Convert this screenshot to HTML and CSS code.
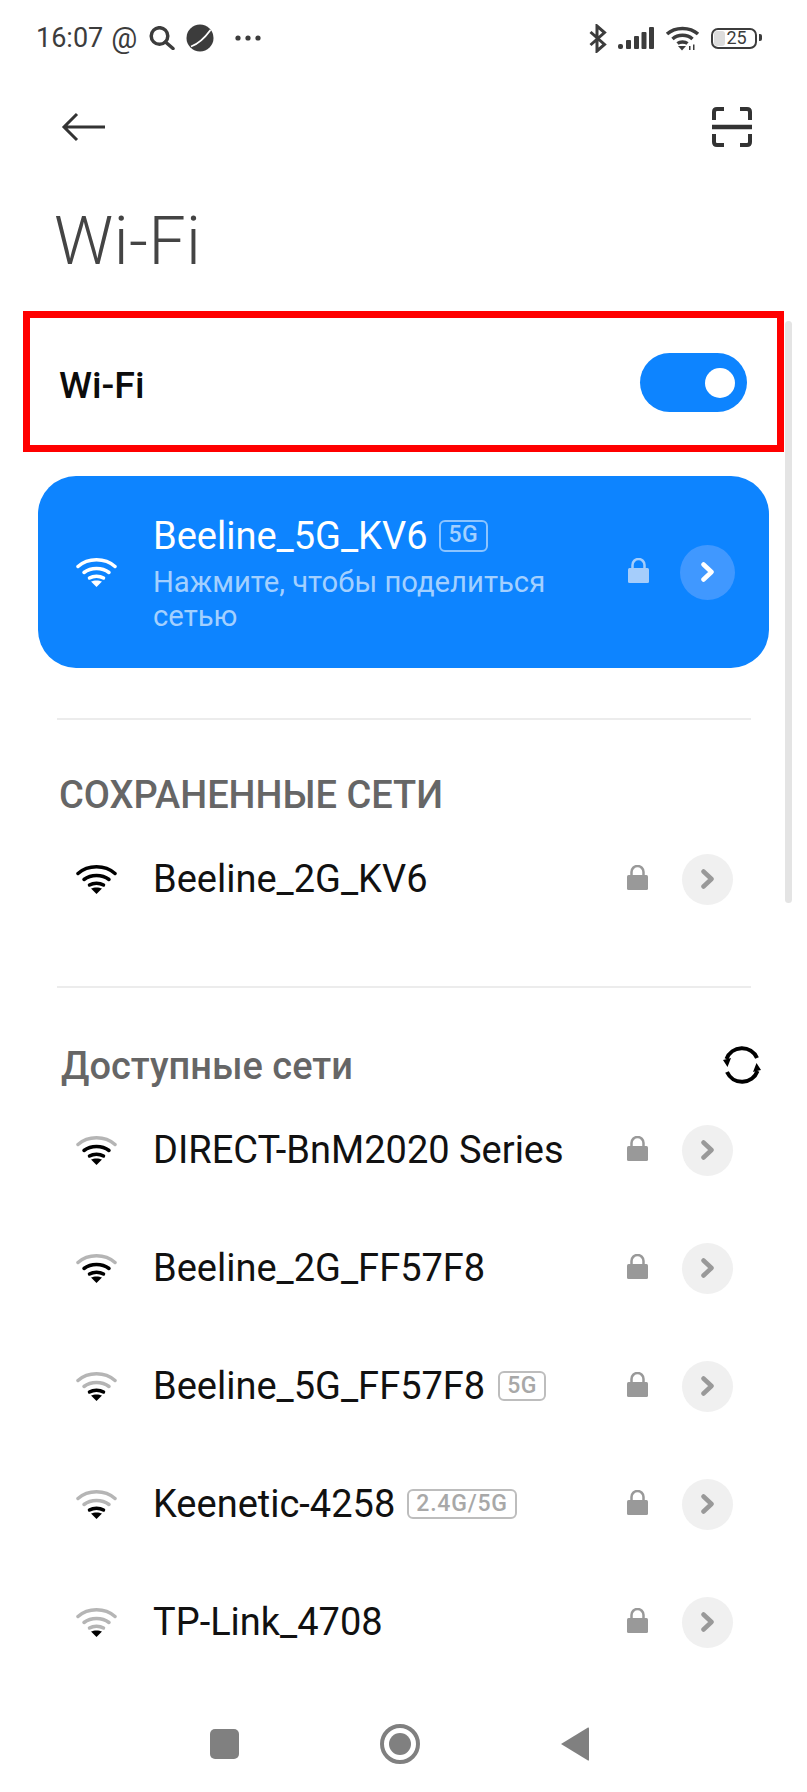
FILE: index.html
```html
<!DOCTYPE html>
<html lang="ru">
<head>
    <meta charset="UTF-8">
    <meta name="viewport" content="width=device-width, initial-scale=1.0">
    <title>Wi-Fi</title>
    <link rel="stylesheet" href="styles.css">
</head>
<body>
    <!-- shared icons -->
    <svg class="defs" width="0" height="0">
        <symbol id="wifi" viewBox="0 0 41 30">
            <path class="arc arc-outer" d="M2 9.5C12 0.5 29 0.5 39 9.5"/>
            <path class="arc arc-mid" d="M8 15.5C15 10 26 10 33 15.5"/>
            <path class="arc arc-inner" d="M13.5 21C17.5 18.5 23.5 18.5 27.5 21"/>
            <path class="wedge" d="M15 24.5C18 23 23 23 26 24.5L20.5 30Z"/>
        </symbol>
        <symbol id="lock" viewBox="0 0 21 25">
            <path class="lock-ring" d="M4.5 11V7a6 6 0 0 1 12 0V11"/>
            <rect class="lock-body" x="0" y="10" width="21" height="15" rx="1.5"/>
        </symbol>
        <symbol id="chevron" viewBox="0 0 14 20">
            <path class="chev-line" d="M2.5 2.5L10.5 10L2.5 17.5"/>
        </symbol>
    </svg>

    <div class="scrollbar"></div>

    <div class="status">
        <div class="status-left">
            <span class="time">16:07</span>
            <span class="at">@</span>
            <svg class="ic-search" width="26" height="24" viewBox="0 0 26 24">
                <circle cx="10.5" cy="10" r="8.3"/>
                <path d="M16.5 16L24 22.5"/>
            </svg>
            <svg class="ic-planet" width="28" height="28" viewBox="0 0 28 28">
                <circle cx="14" cy="14" r="13.5"/>
                <path d="M5 22.500Q15 19 24.500 6"/>
            </svg>
            <svg class="ic-dots" width="26" height="6" viewBox="0 0 26 6">
                <circle cx="3" cy="3" r="2.6"/>
                <circle cx="13" cy="3" r="2.6"/>
                <circle cx="23" cy="3" r="2.6"/>
            </svg>
        </div>
        <div class="status-right">
            <svg class="ic-bt" width="18" height="29" viewBox="0 0 18 29">
                <path d="M1.5 8L15.5 20.5L8 27V2L15.5 8.5L1.5 21"/>
            </svg>
            <svg class="ic-signal" width="36" height="22" viewBox="0 0 36 22">
                <rect x="0" y="17" width="5" height="5" rx="2"/>
                <rect x="8" y="13" width="5" height="9" rx="1"/>
                <rect x="16" y="9" width="5" height="13" rx="1"/>
                <rect x="23.5" y="5" width="5" height="17" rx="1"/>
                <rect x="31" y="0" width="5" height="22" rx="1"/>
            </svg>
            <svg class="ic-wifi-small" width="35" height="26" viewBox="0 0 35 26">
                <path d="M2 9C10 1.5 25 1.500 33 9"/>
                <path d="M7.500 14C13 9 22 9 27.500 14"/>
                <path d="M12.500 18.500C15 16.500 20 16.500 22.500 18.500"/>
                <path class="fill" d="M13 21H21L17 25.500Z"/>
                <path class="fill" d="M24 25V21H25.500V25ZM28 25V19.500H29.500V25Z"/>
            </svg>
            <div class="battery">
                <div class="battery-level"></div>
                <span class="battery-text">25</span>
            </div>
        </div>
    </div>

    <div class="toolbar">
        <svg class="ic-back" width="44" height="30" viewBox="0 0 44 30">
            <path d="M44 15H3M16 2L3 15L16 28"/>
        </svg>
        <svg class="ic-scan" width="40" height="40" viewBox="0 0 40 40">
            <path d="M12 2H5Q2 2 2 5V13M28 2H35Q38 2 38 5V13M12 38H5Q2 38 2 35V27M28 38H35Q38 38 38 35V27"/>
            <path class="scan-bar" d="M0 20H40"/>
        </svg>
    </div>

    <h1 class="title">Wi-Fi</h1>

    <div class="switch-box">
        <span class="switch-label">Wi-Fi</span>
        <div class="toggle"><div class="knob"></div></div>
    </div>

    <div class="current">
        <svg class="wifi"><use href="#wifi"/></svg>
        <div class="current-text">
            <div class="current-name">
                <span>Beeline_5G_KV6</span>
                <span class="badge">5G</span>
            </div>
            <div class="current-sub">Нажмите, чтобы поделиться сетью</div>
        </div>
        <svg class="lock"><use href="#lock"/></svg>
        <div class="go"><svg class="chevron"><use href="#chevron"/></svg></div>
    </div>

    <div class="divider first"></div>

    <div class="section-head saved">СОХРАНЕННЫЕ СЕТИ</div>
    <div class="row">
        <svg class="wifi"><use href="#wifi"/></svg>
        <span class="name">Beeline_2G_KV6</span>
        <svg class="lock"><use href="#lock"/></svg>
        <div class="go"><svg class="chevron"><use href="#chevron"/></svg></div>
    </div>

    <div class="divider second"></div>

    <div class="section-head available">
        <span>Доступные сети</span>
        <svg class="ic-sync" width="40" height="40" viewBox="0 0 40 40">
            <path d="M4.500 14A16.500 16.500 0 0 1 35 13M35.500 26A16.500 16.500 0 0 1 5 27"/>
            <path class="fill" d="M1 15L9 13L5.500 22ZM39 25L31 27L34.500 18Z"/>
        </svg>
    </div>

    <div class="row">
        <svg class="wifi lvl-3"><use href="#wifi"/></svg>
        <span class="name">DIRECT-BnM2020 Series</span>
        <svg class="lock"><use href="#lock"/></svg>
        <div class="go"><svg class="chevron"><use href="#chevron"/></svg></div>
    </div>
    <div class="row">
        <svg class="wifi lvl-3"><use href="#wifi"/></svg>
        <span class="name">Beeline_2G_FF57F8</span>
        <svg class="lock"><use href="#lock"/></svg>
        <div class="go"><svg class="chevron"><use href="#chevron"/></svg></div>
    </div>
    <div class="row">
        <svg class="wifi lvl-2"><use href="#wifi"/></svg>
        <span class="name">Beeline_5G_FF57F8</span>
        <span class="badge">5G</span>
        <svg class="lock"><use href="#lock"/></svg>
        <div class="go"><svg class="chevron"><use href="#chevron"/></svg></div>
    </div>
    <div class="row">
        <svg class="wifi lvl-2"><use href="#wifi"/></svg>
        <span class="name">Keenetic-4258</span>
        <span class="badge wide">2.4G/5G</span>
        <svg class="lock"><use href="#lock"/></svg>
        <div class="go"><svg class="chevron"><use href="#chevron"/></svg></div>
    </div>
    <div class="row">
        <svg class="wifi lvl-1"><use href="#wifi"/></svg>
        <span class="name">TP-Link_4708</span>
        <svg class="lock"><use href="#lock"/></svg>
        <div class="go"><svg class="chevron"><use href="#chevron"/></svg></div>
    </div>

    <div class="navbar">
        <svg width="29" height="30" viewBox="0 0 29 30"><rect width="29" height="30" rx="5"/></svg>
        <svg width="40" height="40" viewBox="0 0 40 40">
            <circle class="nav-ring" cx="20" cy="20" r="18"/>
            <circle cx="20" cy="20" r="11"/>
        </svg>
        <svg width="28" height="34" viewBox="0 0 28 34"><path d="M0 17L27 0.5Q28 0 28 1.500V32.500Q28 34 27 33.500Z"/></svg>
    </div>
</body>
</html>
```

FILE: styles.css
```css
body {
    margin: 0;
    width: 807px;
    height: 1792px;
    overflow: hidden;
    position: relative;
    background: #fff;
    color: #111;
    font-family: Roboto, "Liberation Sans", sans-serif;
}
.defs {
    position: absolute;
}
.scrollbar {
    position: absolute;
    left: 785px;
    top: 321px;
    width: 7px;
    height: 582px;
    border-radius: 4px;
    background: #e4e4e4;
}

/* status bar */
.status {
    height: 76px;
    padding: 0 50px 0 36px;
    display: flex;
    align-items: center;
    justify-content: space-between;
    color: #3c3c3c;
}
.status-left,
.status-right {
    display: flex;
    align-items: center;
}
.status-right {
    gap: 11px;
}
.time {
    font-size: 27px;
}
.at {
    font-size: 29px;
    margin-left: 8px;
}
.ic-search {
    margin-left: 12px;
    fill: none;
    stroke: #3c3c3c;
    stroke-width: 3.5;
    stroke-linecap: round;
}
.ic-planet {
    margin-left: 11px;
    fill: #3c3c3c;
}
.ic-planet path {
    fill: none;
    stroke: #fff;
    stroke-width: 1.8;
}
.ic-dots {
    margin-left: 21px;
    fill: #3c3c3c;
}
.ic-bt {
    fill: none;
    stroke: #3c3c3c;
    stroke-width: 3;
}
.ic-signal {
    fill: #3c3c3c;
}
.ic-wifi-small {
    fill: none;
    stroke: #3c3c3c;
    stroke-width: 3.5;
}
.ic-wifi-small .fill,
.ic-sync .fill {
    fill: currentColor;
    stroke: none;
}
.battery {
    position: relative;
    width: 46px;
    height: 21px;
    box-sizing: border-box;
    border: 2.5px solid #3c3c3c;
    border-radius: 7px;
    display: flex;
    align-items: center;
    justify-content: center;
}
.battery::after {
    content: "";
    position: absolute;
    right: -7px;
    top: 4px;
    width: 3px;
    height: 7px;
    border-radius: 0 2px 2px 0;
    background: #3c3c3c;
}
.battery-level {
    position: absolute;
    left: 1px;
    top: 1px;
    bottom: 1px;
    width: 11px;
    border-radius: 3px;
    background: #dcdcdc;
}
.battery-text {
    position: relative;
    margin-left: 5px;
    font-size: 18px;
    line-height: 1;
}

/* toolbar and title */
.toolbar {
    height: 102px;
    padding: 0 55px 0 61px;
    display: flex;
    align-items: center;
    justify-content: space-between;
}
.ic-back {
    fill: none;
    stroke: #333;
    stroke-width: 3;
}
.ic-scan {
    fill: none;
    stroke: #333;
    stroke-width: 4;
}
.scan-bar {
    stroke-width: 4.5;
}
.title {
    margin: 14px 0 19px 54px;
    height: 100px;
    font-size: 66px;
    line-height: 100px;
    font-weight: 300;
    letter-spacing: 0.5px;
    color: #444;
}

/* switch in the red frame */
.switch-box {
    width: 761px;
    height: 141px;
    margin-left: 23px;
    padding: 0 30px 0 29px;
    box-sizing: border-box;
    border: 7px solid #f00;
    display: flex;
    align-items: center;
    justify-content: space-between;
}
.switch-label {
    margin-top: 7px;
    font-size: 37.5px;
    font-weight: 500;
    color: #0c0c0c;
}
.toggle {
    width: 107px;
    height: 59px;
    margin-top: 2px;
    padding-right: 12px;
    box-sizing: border-box;
    border-radius: 30px;
    background: #0d84ff;
    display: flex;
    align-items: center;
    justify-content: flex-end;
}
.knob {
    width: 30px;
    height: 30px;
    border-radius: 50%;
    background: #fff;
}

/* wifi icon levels */
.wifi {
    width: 41px;
    height: 30px;
    flex: none;
    --outer: #000;
    --mid: #000;
    --inner: #000;
    --wedge: #000;
}
.lvl-3 {
    --outer: #b5b5b5;
}
.lvl-2 {
    --outer: #b5b5b5;
    --mid: #b5b5b5;
}
.lvl-1 {
    --outer: #b5b5b5;
    --mid: #b5b5b5;
    --inner: #b5b5b5;
}
.arc {
    fill: none;
    stroke-width: 3.5;
    stroke-linecap: round;
}
.arc-outer {
    stroke: var(--outer);
}
.arc-mid {
    stroke: var(--mid);
}
.arc-inner {
    stroke: var(--inner);
}
.wedge {
    fill: var(--wedge);
}
.lock {
    width: 21px;
    height: 25px;
    flex: none;
    margin-bottom: 4px;
    --lock: #999;
}
.lock-ring {
    fill: none;
    stroke: var(--lock);
    stroke-width: 2.5;
}
.lock-body {
    fill: var(--lock);
}
.go {
    width: 51px;
    height: 51px;
    flex: none;
    margin-left: 34px;
    border-radius: 50%;
    background: #f0f0f0;
    display: flex;
    align-items: center;
    justify-content: center;
}
.chevron {
    width: 14px;
    height: 20px;
    --chev: #999;
}
.chev-line {
    fill: none;
    stroke: var(--chev);
    stroke-width: 4.5;
    stroke-linecap: round;
    stroke-linejoin: round;
}

/* connected network */
.current {
    width: 731px;
    height: 192px;
    margin: 24px 0 0 38px;
    padding: 0 34px 0 38px;
    box-sizing: border-box;
    border-radius: 38px;
    background: #0d84ff;
    color: #fff;
    display: flex;
    align-items: center;
}
.current .wifi {
    --outer: #fff;
    --mid: #fff;
    --inner: #fff;
    --wedge: #fff;
}
.current-text {
    flex: 1;
    width: 0;
    margin-left: 36px;
    padding-right: 60px;
    padding-bottom: 4px;
}
.current-name {
    display: flex;
    align-items: center;
    font-size: 38px;
    line-height: 58px;
}
.current-sub {
    font-size: 29.25px;
    line-height: 34px;
    color: #a3d0ff;
}
.current .badge {
    height: 32px;
    margin-left: 11px;
    padding: 0 8px;
    color: #a3d0ff;
    border-color: #8cc4ff;
}
.current .lock {
    --lock: #a5cdfb;
}
.current .go {
    width: 55px;
    height: 55px;
    margin-left: 31px;
    background: #4098ff;
}
.current .chevron {
    --chev: #fff;
}
.badge {
    margin-left: 13px;
    padding: 0 7px;
    height: 30px;
    box-sizing: border-box;
    border: 2px solid #bdbdbd;
    border-radius: 6px;
    font-size: 23px;
    line-height: 26px;
    font-weight: 500;
    letter-spacing: 0.5px;
    color: #a8a8a8;
}
.badge.wide {
    margin-left: 12px;
    letter-spacing: 0.8px;
}

/* lists */
.divider {
    height: 2px;
    margin: 0 56px 0 57px;
    background: #ececec;
}
.divider.first {
    margin-top: 50px;
}
.divider.second {
    margin-top: 48px;
}
.section-head {
    height: 50px;
    font-size: 38px;
    font-weight: 500;
    line-height: 50px;
    color: #666;
}
.saved {
    margin-top: 50px;
    padding-left: 59px;
}
.available {
    margin-top: 53px;
    padding: 0 45px 0 61px;
    display: flex;
    align-items: center;
    justify-content: space-between;
}
.ic-sync {
    margin-bottom: 3px;
    fill: none;
    stroke: #000;
    stroke-width: 4;
    color: #000;
}
.row {
    height: 118px;
    padding: 0 74px 0 76px;
    display: flex;
    align-items: center;
}
.name {
    margin-left: 36px;
    font-size: 38px;
    color: #111;
}
.row .lock {
    margin-left: auto;
}

/* navigation bar */
.navbar {
    height: 98px;
    margin-top: 14px;
    padding-left: 210px;
    display: flex;
    align-items: center;
    gap: 141px;
    fill: #808080;
}
.nav-ring {
    fill: none;
    stroke: #808080;
    stroke-width: 4;
}
```
